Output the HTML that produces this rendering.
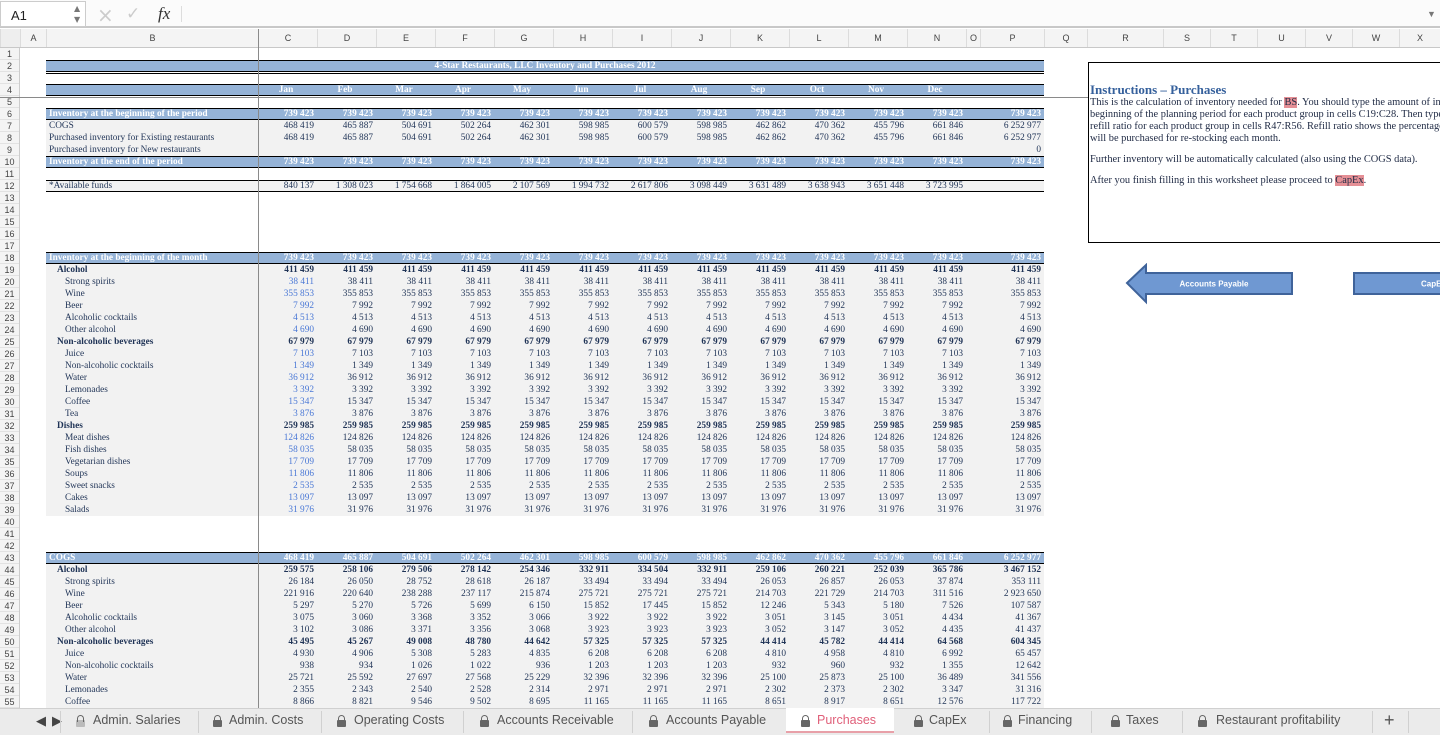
<!DOCTYPE html>
<html><head><meta charset="utf-8"><style>
*{margin:0;padding:0;box-sizing:border-box}
body{width:1440px;height:735px;overflow:hidden;background:#fff;position:relative;font-family:"Liberation Serif",serif}
#fb{position:absolute;left:0;top:0;width:1440px;height:28px;background:#fbfbfb;border-bottom:2px solid #c8c8c8}
#nb{position:absolute;left:0;top:1px;width:86px;height:26px;background:#fff;border:1px solid #ccc;font:13px "Liberation Sans",sans-serif;padding:6px 0 0 10px;color:#222}
.sp{position:absolute;left:73px;font-size:8px;color:#777;font-family:"DejaVu Sans",sans-serif}
#ch{position:absolute;left:0;top:29px;height:19px;width:1440px;background:#f4f4f4;border-bottom:1px solid #c8c8c8}
#ch div{position:absolute;top:0;height:18px;border-left:1px solid #dcdcdc;font:9px "Liberation Sans",sans-serif;color:#444;text-align:center;line-height:18px}
table{position:absolute;left:0;top:48px;border-collapse:separate;border-spacing:0;table-layout:fixed;width:1440px}
th{width:20px;height:12px;background:#f4f4f4;font:400 9px "Liberation Sans",sans-serif;color:#444;text-align:center;border-right:1px solid #ccc;box-shadow:inset 0 -1px #e2e2e2;line-height:12px}
td{height:12px;line-height:12px;font-size:9.3px;color:#1f3356;white-space:nowrap;overflow:hidden;text-align:right;padding:0 3px 0 0}
td:nth-child(3){text-align:left;padding-left:3px}
tr.g td:nth-child(n+3):nth-child(-n+17){background:#f2f2f2}
tr.h td:nth-child(n+3):nth-child(-n+17){background:#95b3d7;color:#fff;font-weight:bold;box-shadow:inset 0 1px #000,inset 0 -1px #000}
tr.t td:nth-child(n+3):nth-child(-n+17){box-shadow:inset 0 1px #000,inset 0 -1px #000}
tr.b td{font-weight:bold}
td.l1{padding-left:11px!important;font-weight:bold}
td.l2{padding-left:19px!important}
td.c{color:#4a78d6}
.vl{position:absolute;left:258px;top:29px;width:1px;height:679px;background:#8a8a8a}
.hl{position:absolute;left:0;top:97px;width:1440px;height:1px;background:#8a8a8a}
#ins{position:absolute;left:1088px;top:62px;width:360px;height:181px;border:1px solid #000;background:#fff;font-size:10.4px;color:#1f2a44;padding:20px 0 0 1px;line-height:12px;white-space:nowrap;overflow:hidden}
#ins h3{font-size:13px;color:#35609c;font-weight:bold;line-height:14px;margin-bottom:0}
#ins p{margin-bottom:9px}
.hi{background:#e58f95}
#tabs{position:absolute;left:0;top:708px;width:1440px;height:27px;background:#ebebeb;border-top:1px solid #d0d0d0;font:12.5px "Liberation Sans",sans-serif;color:#555}
#tabs span{position:absolute;top:4px}
.lk{position:absolute;top:11px;width:9px;height:7px;background:#666;border-radius:1px}
.lk:before{content:"";position:absolute;left:1px;top:-5px;width:5px;height:6px;border:1.5px solid #666;border-bottom:none;border-radius:4px 4px 0 0}
.sep{position:absolute;top:2px;width:1px;height:22px;background:#d0d0d0}
</style></head><body>
<div id="fb"><div id="nb">A1<span class="sp" style="top:2px">▲</span><span class="sp" style="top:13px">▼</span></div>
<span style="position:absolute;left:97px;top:3px;font:20px 'DejaVu Sans',sans-serif;color:#ccc">×</span>
<span style="position:absolute;left:126px;top:4px;font:17px 'DejaVu Sans',sans-serif;color:#ccc">✓</span>
<span style="position:absolute;left:158px;top:4px;font:italic 17px 'Liberation Serif',serif;color:#333">fx</span>
<div style="position:absolute;left:181px;top:6px;width:1px;height:16px;background:#ddd"></div>
<span style="position:absolute;left:1427px;top:9px;font-size:9px;color:#777">▼</span></div>
<div id="ch">
<div style="left:0;width:20px;background:#eee"></div>
<div style="left:20px;width:26px">A</div><div style="left:46px;width:212px">B</div>
<div style="left:258px;width:59px">C</div><div style="left:317px;width:59px">D</div><div style="left:376px;width:59px">E</div><div style="left:435px;width:59px">F</div><div style="left:494px;width:59px">G</div><div style="left:553px;width:59px">H</div><div style="left:612px;width:59px">I</div><div style="left:671px;width:59px">J</div><div style="left:730px;width:59px">K</div><div style="left:789px;width:59px">L</div><div style="left:848px;width:59px">M</div><div style="left:907px;width:59px">N</div><div style="left:966px;width:14px">O</div><div style="left:980px;width:64px">P</div><div style="left:1044px;width:43px">Q</div><div style="left:1087px;width:76px">R</div><div style="left:1163px;width:47px">S</div><div style="left:1210px;width:47px">T</div><div style="left:1257px;width:48px">U</div><div style="left:1305px;width:47px">V</div><div style="left:1352px;width:47px">W</div><div style="left:1399px;width:41px">X</div>
</div>
<table>
<colgroup><col style="width:20px"><col style="width:26px"><col style="width:212px"><col span="12" style="width:59px"><col style="width:14px"><col style="width:64px"><col style="width:396px"></colgroup>
<tr><th>1</th></tr>
<tr class="h"><th>2</th><td></td><td colspan="15" style="text-align:center">4-Star Restaurants, LLC Inventory and Purchases 2012</td></tr>
<tr><th>3</th><td></td><td colspan="15" style="box-shadow:inset 0 1px #fff,inset 0 2px #000"></td></tr>
<tr class="h"><th>4</th><td></td><td></td><td style="text-align:center">Jan</td><td style="text-align:center">Feb</td><td style="text-align:center">Mar</td><td style="text-align:center">Apr</td><td style="text-align:center">May</td><td style="text-align:center">Jun</td><td style="text-align:center">Jul</td><td style="text-align:center">Aug</td><td style="text-align:center">Sep</td><td style="text-align:center">Oct</td><td style="text-align:center">Nov</td><td style="text-align:center">Dec</td><td></td><td></td></tr>
<tr><th>5</th></tr>
<tr class="h"><th>6</th><td></td><td>Inventory at the beginning of the period</td><td>739 423</td><td>739 423</td><td>739 423</td><td>739 423</td><td>739 423</td><td>739 423</td><td>739 423</td><td>739 423</td><td>739 423</td><td>739 423</td><td>739 423</td><td>739 423</td><td></td><td>739 423</td></tr>
<tr class="g"><th>7</th><td></td><td>COGS</td><td>468 419</td><td>465 887</td><td>504 691</td><td>502 264</td><td>462 301</td><td>598 985</td><td>600 579</td><td>598 985</td><td>462 862</td><td>470 362</td><td>455 796</td><td>661 846</td><td></td><td>6 252 977</td></tr>
<tr class="g"><th>8</th><td></td><td>Purchased inventory for Existing restaurants</td><td>468 419</td><td>465 887</td><td>504 691</td><td>502 264</td><td>462 301</td><td>598 985</td><td>600 579</td><td>598 985</td><td>462 862</td><td>470 362</td><td>455 796</td><td>661 846</td><td></td><td>6 252 977</td></tr>
<tr class="g"><th>9</th><td></td><td>Purchased inventory for New restaurants</td><td></td><td></td><td></td><td></td><td></td><td></td><td></td><td></td><td></td><td></td><td></td><td></td><td></td><td>0</td></tr>
<tr class="h"><th>10</th><td></td><td>Inventory at the end of the period</td><td>739 423</td><td>739 423</td><td>739 423</td><td>739 423</td><td>739 423</td><td>739 423</td><td>739 423</td><td>739 423</td><td>739 423</td><td>739 423</td><td>739 423</td><td>739 423</td><td></td><td>739 423</td></tr>
<tr><th>11</th></tr>
<tr class="g t"><th>12</th><td></td><td>*Available funds</td><td>840 137</td><td>1 308 023</td><td>1 754 668</td><td>1 864 005</td><td>2 107 569</td><td>1 994 732</td><td>2 617 806</td><td>3 098 449</td><td>3 631 489</td><td>3 638 943</td><td>3 651 448</td><td>3 723 995</td><td></td><td></td></tr>
<tr><th>13</th></tr><tr><th>14</th></tr><tr><th>15</th></tr><tr><th>16</th></tr><tr><th>17</th></tr>
<tr class="h"><th>18</th><td></td><td>Inventory at the beginning of the month</td><td>739 423</td><td>739 423</td><td>739 423</td><td>739 423</td><td>739 423</td><td>739 423</td><td>739 423</td><td>739 423</td><td>739 423</td><td>739 423</td><td>739 423</td><td>739 423</td><td></td><td>739 423</td></tr>
<tr class="g b"><th>19</th><td></td><td class="l1">Alcohol</td><td>411 459</td><td>411 459</td><td>411 459</td><td>411 459</td><td>411 459</td><td>411 459</td><td>411 459</td><td>411 459</td><td>411 459</td><td>411 459</td><td>411 459</td><td>411 459</td><td></td><td>411 459</td></tr>
<tr class="g"><th>20</th><td></td><td class="l2">Strong spirits</td><td class="c">38 411</td><td>38 411</td><td>38 411</td><td>38 411</td><td>38 411</td><td>38 411</td><td>38 411</td><td>38 411</td><td>38 411</td><td>38 411</td><td>38 411</td><td>38 411</td><td></td><td>38 411</td></tr>
<tr class="g"><th>21</th><td></td><td class="l2">Wine</td><td class="c">355 853</td><td>355 853</td><td>355 853</td><td>355 853</td><td>355 853</td><td>355 853</td><td>355 853</td><td>355 853</td><td>355 853</td><td>355 853</td><td>355 853</td><td>355 853</td><td></td><td>355 853</td></tr>
<tr class="g"><th>22</th><td></td><td class="l2">Beer</td><td class="c">7 992</td><td>7 992</td><td>7 992</td><td>7 992</td><td>7 992</td><td>7 992</td><td>7 992</td><td>7 992</td><td>7 992</td><td>7 992</td><td>7 992</td><td>7 992</td><td></td><td>7 992</td></tr>
<tr class="g"><th>23</th><td></td><td class="l2">Alcoholic cocktails</td><td class="c">4 513</td><td>4 513</td><td>4 513</td><td>4 513</td><td>4 513</td><td>4 513</td><td>4 513</td><td>4 513</td><td>4 513</td><td>4 513</td><td>4 513</td><td>4 513</td><td></td><td>4 513</td></tr>
<tr class="g"><th>24</th><td></td><td class="l2">Other alcohol</td><td class="c">4 690</td><td>4 690</td><td>4 690</td><td>4 690</td><td>4 690</td><td>4 690</td><td>4 690</td><td>4 690</td><td>4 690</td><td>4 690</td><td>4 690</td><td>4 690</td><td></td><td>4 690</td></tr>
<tr class="g b"><th>25</th><td></td><td class="l1">Non-alcoholic beverages</td><td>67 979</td><td>67 979</td><td>67 979</td><td>67 979</td><td>67 979</td><td>67 979</td><td>67 979</td><td>67 979</td><td>67 979</td><td>67 979</td><td>67 979</td><td>67 979</td><td></td><td>67 979</td></tr>
<tr class="g"><th>26</th><td></td><td class="l2">Juice</td><td class="c">7 103</td><td>7 103</td><td>7 103</td><td>7 103</td><td>7 103</td><td>7 103</td><td>7 103</td><td>7 103</td><td>7 103</td><td>7 103</td><td>7 103</td><td>7 103</td><td></td><td>7 103</td></tr>
<tr class="g"><th>27</th><td></td><td class="l2">Non-alcoholic cocktails</td><td class="c">1 349</td><td>1 349</td><td>1 349</td><td>1 349</td><td>1 349</td><td>1 349</td><td>1 349</td><td>1 349</td><td>1 349</td><td>1 349</td><td>1 349</td><td>1 349</td><td></td><td>1 349</td></tr>
<tr class="g"><th>28</th><td></td><td class="l2">Water</td><td class="c">36 912</td><td>36 912</td><td>36 912</td><td>36 912</td><td>36 912</td><td>36 912</td><td>36 912</td><td>36 912</td><td>36 912</td><td>36 912</td><td>36 912</td><td>36 912</td><td></td><td>36 912</td></tr>
<tr class="g"><th>29</th><td></td><td class="l2">Lemonades</td><td class="c">3 392</td><td>3 392</td><td>3 392</td><td>3 392</td><td>3 392</td><td>3 392</td><td>3 392</td><td>3 392</td><td>3 392</td><td>3 392</td><td>3 392</td><td>3 392</td><td></td><td>3 392</td></tr>
<tr class="g"><th>30</th><td></td><td class="l2">Coffee</td><td class="c">15 347</td><td>15 347</td><td>15 347</td><td>15 347</td><td>15 347</td><td>15 347</td><td>15 347</td><td>15 347</td><td>15 347</td><td>15 347</td><td>15 347</td><td>15 347</td><td></td><td>15 347</td></tr>
<tr class="g"><th>31</th><td></td><td class="l2">Tea</td><td class="c">3 876</td><td>3 876</td><td>3 876</td><td>3 876</td><td>3 876</td><td>3 876</td><td>3 876</td><td>3 876</td><td>3 876</td><td>3 876</td><td>3 876</td><td>3 876</td><td></td><td>3 876</td></tr>
<tr class="g b"><th>32</th><td></td><td class="l1" style="padding-left:11px!important">Dishes</td><td>259 985</td><td>259 985</td><td>259 985</td><td>259 985</td><td>259 985</td><td>259 985</td><td>259 985</td><td>259 985</td><td>259 985</td><td>259 985</td><td>259 985</td><td>259 985</td><td></td><td>259 985</td></tr>
<tr class="g"><th>33</th><td></td><td class="l2">Meat dishes</td><td class="c">124 826</td><td>124 826</td><td>124 826</td><td>124 826</td><td>124 826</td><td>124 826</td><td>124 826</td><td>124 826</td><td>124 826</td><td>124 826</td><td>124 826</td><td>124 826</td><td></td><td>124 826</td></tr>
<tr class="g"><th>34</th><td></td><td class="l2">Fish dishes</td><td class="c">58 035</td><td>58 035</td><td>58 035</td><td>58 035</td><td>58 035</td><td>58 035</td><td>58 035</td><td>58 035</td><td>58 035</td><td>58 035</td><td>58 035</td><td>58 035</td><td></td><td>58 035</td></tr>
<tr class="g"><th>35</th><td></td><td class="l2">Vegetarian dishes</td><td class="c">17 709</td><td>17 709</td><td>17 709</td><td>17 709</td><td>17 709</td><td>17 709</td><td>17 709</td><td>17 709</td><td>17 709</td><td>17 709</td><td>17 709</td><td>17 709</td><td></td><td>17 709</td></tr>
<tr class="g"><th>36</th><td></td><td class="l2">Soups</td><td class="c">11 806</td><td>11 806</td><td>11 806</td><td>11 806</td><td>11 806</td><td>11 806</td><td>11 806</td><td>11 806</td><td>11 806</td><td>11 806</td><td>11 806</td><td>11 806</td><td></td><td>11 806</td></tr>
<tr class="g"><th>37</th><td></td><td class="l2">Sweet snacks</td><td class="c">2 535</td><td>2 535</td><td>2 535</td><td>2 535</td><td>2 535</td><td>2 535</td><td>2 535</td><td>2 535</td><td>2 535</td><td>2 535</td><td>2 535</td><td>2 535</td><td></td><td>2 535</td></tr>
<tr class="g"><th>38</th><td></td><td class="l2">Cakes</td><td class="c">13 097</td><td>13 097</td><td>13 097</td><td>13 097</td><td>13 097</td><td>13 097</td><td>13 097</td><td>13 097</td><td>13 097</td><td>13 097</td><td>13 097</td><td>13 097</td><td></td><td>13 097</td></tr>
<tr class="g"><th>39</th><td></td><td class="l2">Salads</td><td class="c">31 976</td><td>31 976</td><td>31 976</td><td>31 976</td><td>31 976</td><td>31 976</td><td>31 976</td><td>31 976</td><td>31 976</td><td>31 976</td><td>31 976</td><td>31 976</td><td></td><td>31 976</td></tr>
<tr><th>40</th></tr><tr><th>41</th></tr><tr><th>42</th></tr>
<tr class="h"><th>43</th><td></td><td>COGS</td><td>468 419</td><td>465 887</td><td>504 691</td><td>502 264</td><td>462 301</td><td>598 985</td><td>600 579</td><td>598 985</td><td>462 862</td><td>470 362</td><td>455 796</td><td>661 846</td><td></td><td>6 252 977</td></tr>
<tr class="g b"><th>44</th><td></td><td class="l1">Alcohol</td><td>259 575</td><td>258 106</td><td>279 506</td><td>278 142</td><td>254 346</td><td>332 911</td><td>334 504</td><td>332 911</td><td>259 106</td><td>260 221</td><td>252 039</td><td>365 786</td><td></td><td>3 467 152</td></tr>
<tr class="g"><th>45</th><td></td><td class="l2">Strong spirits</td><td>26 184</td><td>26 050</td><td>28 752</td><td>28 618</td><td>26 187</td><td>33 494</td><td>33 494</td><td>33 494</td><td>26 053</td><td>26 857</td><td>26 053</td><td>37 874</td><td></td><td>353 111</td></tr>
<tr class="g"><th>46</th><td></td><td class="l2">Wine</td><td>221 916</td><td>220 640</td><td>238 288</td><td>237 117</td><td>215 874</td><td>275 721</td><td>275 721</td><td>275 721</td><td>214 703</td><td>221 729</td><td>214 703</td><td>311 516</td><td></td><td>2 923 650</td></tr>
<tr class="g"><th>47</th><td></td><td class="l2">Beer</td><td>5 297</td><td>5 270</td><td>5 726</td><td>5 699</td><td>6 150</td><td>15 852</td><td>17 445</td><td>15 852</td><td>12 246</td><td>5 343</td><td>5 180</td><td>7 526</td><td></td><td>107 587</td></tr>
<tr class="g"><th>48</th><td></td><td class="l2">Alcoholic cocktails</td><td>3 075</td><td>3 060</td><td>3 368</td><td>3 352</td><td>3 066</td><td>3 922</td><td>3 922</td><td>3 922</td><td>3 051</td><td>3 145</td><td>3 051</td><td>4 434</td><td></td><td>41 367</td></tr>
<tr class="g"><th>49</th><td></td><td class="l2">Other alcohol</td><td>3 102</td><td>3 086</td><td>3 371</td><td>3 356</td><td>3 068</td><td>3 923</td><td>3 923</td><td>3 923</td><td>3 052</td><td>3 147</td><td>3 052</td><td>4 435</td><td></td><td>41 437</td></tr>
<tr class="g b"><th>50</th><td></td><td class="l1">Non-alcoholic beverages</td><td>45 495</td><td>45 267</td><td>49 008</td><td>48 780</td><td>44 642</td><td>57 325</td><td>57 325</td><td>57 325</td><td>44 414</td><td>45 782</td><td>44 414</td><td>64 568</td><td></td><td>604 345</td></tr>
<tr class="g"><th>51</th><td></td><td class="l2">Juice</td><td>4 930</td><td>4 906</td><td>5 308</td><td>5 283</td><td>4 835</td><td>6 208</td><td>6 208</td><td>6 208</td><td>4 810</td><td>4 958</td><td>4 810</td><td>6 992</td><td></td><td>65 457</td></tr>
<tr class="g"><th>52</th><td></td><td class="l2">Non-alcoholic cocktails</td><td>938</td><td>934</td><td>1 026</td><td>1 022</td><td>936</td><td>1 203</td><td>1 203</td><td>1 203</td><td>932</td><td>960</td><td>932</td><td>1 355</td><td></td><td>12 642</td></tr>
<tr class="g"><th>53</th><td></td><td class="l2">Water</td><td>25 721</td><td>25 592</td><td>27 697</td><td>27 568</td><td>25 229</td><td>32 396</td><td>32 396</td><td>32 396</td><td>25 100</td><td>25 873</td><td>25 100</td><td>36 489</td><td></td><td>341 556</td></tr>
<tr class="g"><th>54</th><td></td><td class="l2">Lemonades</td><td>2 355</td><td>2 343</td><td>2 540</td><td>2 528</td><td>2 314</td><td>2 971</td><td>2 971</td><td>2 971</td><td>2 302</td><td>2 373</td><td>2 302</td><td>3 347</td><td></td><td>31 316</td></tr>
<tr class="g"><th>55</th><td></td><td class="l2">Coffee</td><td>8 866</td><td>8 821</td><td>9 546</td><td>9 502</td><td>8 695</td><td>11 165</td><td>11 165</td><td>11 165</td><td>8 651</td><td>8 917</td><td>8 651</td><td>12 576</td><td></td><td>117 722</td></tr>
</table>
<div class="vl"></div><div class="hl"></div>
<div id="ins"><h3>Instructions – Purchases</h3>
<p style="margin-bottom:9px">This is the calculation of inventory needed for <span class="hi">BS</span>. You should type the amount of inventory at the<br>beginning of the planning period for each product group in cells C19:C28. Then type<br>refill ratio for each product group in cells R47:R56. Refill ratio shows the percentage<br>will be purchased for re-stocking each month.</p>
<p>Further inventory will be automatically calculated (also using the COGS data).</p>
<p>After you finish filling in this worksheet please proceed to <span class="hi">CapEx</span>.</p></div>
<svg style="position:absolute;left:1125px;top:263px" width="172" height="42"><polygon points="2,20 21,2 21,10 167,10 167,31 21,31 21,39" fill="#6f98d2" stroke="#3f639a" stroke-width="2"/><text x="89" y="23.5" font-family="Liberation Sans,sans-serif" font-size="8" font-weight="bold" fill="#fff" text-anchor="middle">Accounts Payable</text></svg>
<svg style="position:absolute;left:1353px;top:272px" width="90" height="24"><rect x="1" y="1" width="100" height="21" fill="#6f98d2" stroke="#3f639a" stroke-width="2"/><text x="68" y="14.5" font-family="Liberation Sans,sans-serif" font-size="8" font-weight="bold" fill="#fff">CapEx</text></svg>
<div id="tabs">
<span style="left:36px;font-size:13px;color:#444">◀</span><span style="left:52px;font-size:13px;color:#444">▶</span>
<div class="sep" style="left:60px"></div>
<div class="lk" style="left:76px;background:#bbb"></div><span style="left:93px">Admin. Salaries</span>
<div class="sep" style="left:198px"></div>
<div class="lk" style="left:213px"></div><span style="left:229px">Admin. Costs</span>
<div class="sep" style="left:321px"></div>
<div class="lk" style="left:337px"></div><span style="left:354px">Operating Costs</span>
<div class="sep" style="left:463px"></div>
<div class="lk" style="left:480px"></div><span style="left:497px">Accounts Receivable</span>
<div class="sep" style="left:632px"></div>
<div class="lk" style="left:649px"></div><span style="left:666px">Accounts Payable</span>
<div style="position:absolute;left:786px;top:-1px;width:108px;height:25px;background:#fff;border-bottom:2px solid #e8a0a8"></div>
<div class="lk" style="left:801px;background:#666"></div><span style="left:817px;color:#e0607a">Purchases</span>
<div class="lk" style="left:914px"></div><span style="left:929px">CapEx</span>
<div class="sep" style="left:989px"></div>
<div class="lk" style="left:1003px"></div><span style="left:1018px">Financing</span>
<div class="sep" style="left:1091px"></div>
<div class="lk" style="left:1111px"></div><span style="left:1126px">Taxes</span>
<div class="sep" style="left:1182px"></div>
<div class="lk" style="left:1198px"></div><span style="left:1216px">Restaurant profitability</span>
<div class="sep" style="left:1372px"></div>
<span style="left:1384px;font-size:18px;top:1px;color:#555">+</span>
<div class="sep" style="left:1408px"></div>
</div>
</body></html>
